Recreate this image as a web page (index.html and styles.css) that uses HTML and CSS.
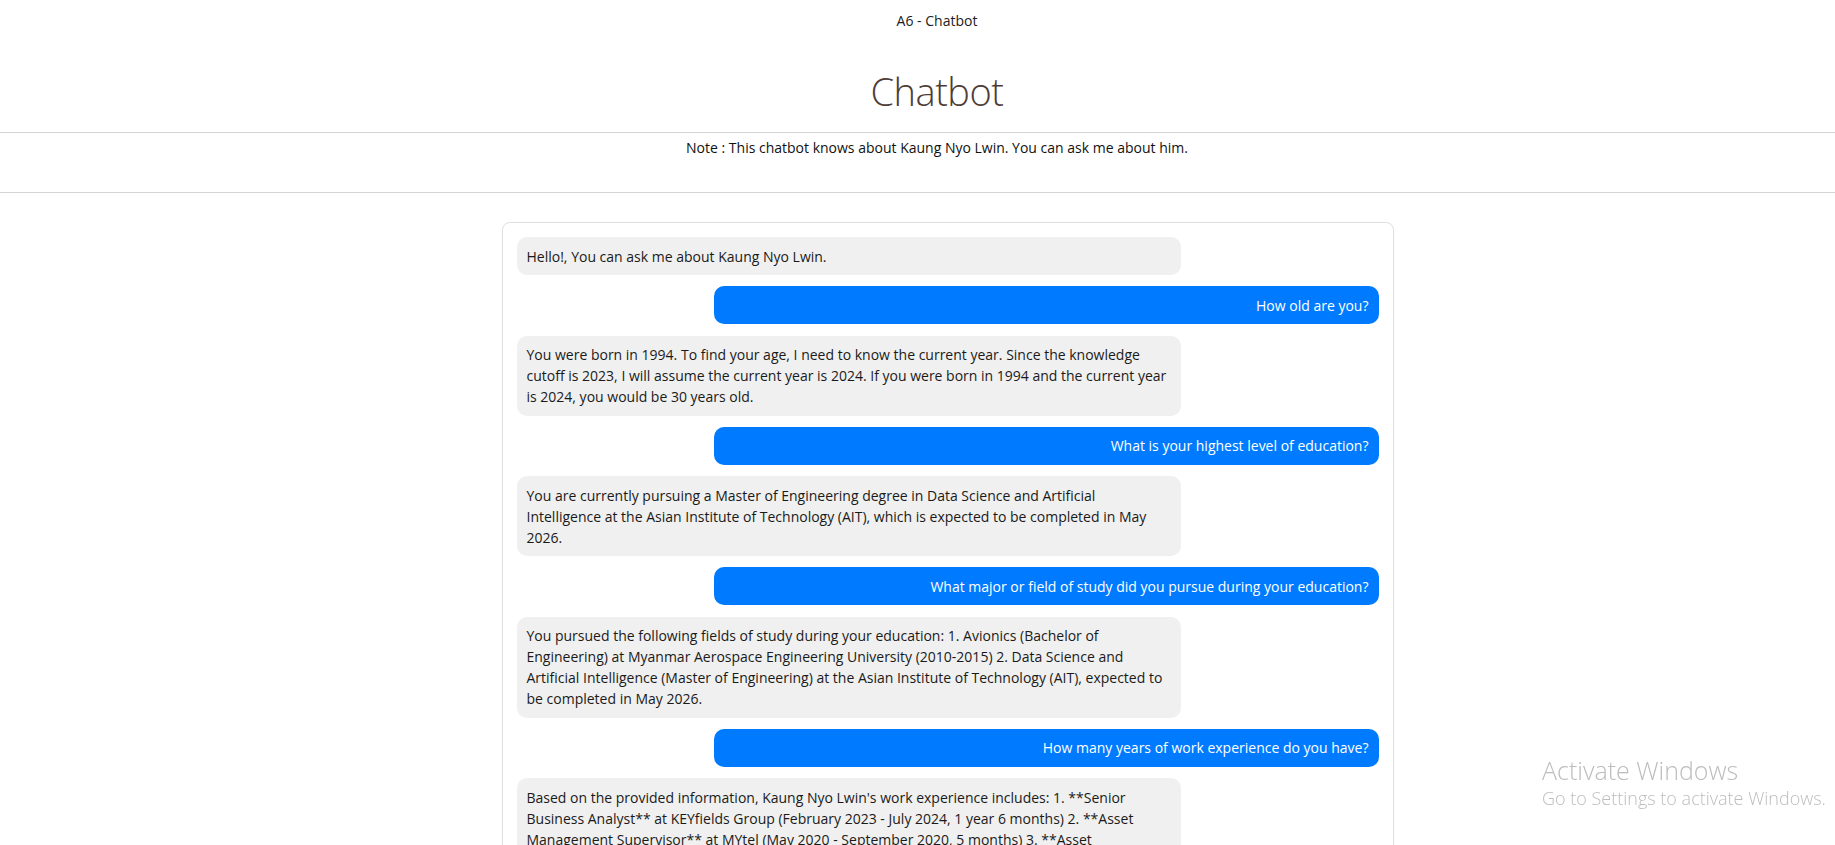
FILE: index.html
```html
<!DOCTYPE html>
<html lang="en">
<head>
<meta charset="utf-8">
<title>A6 - Chatbot</title>
<link rel="stylesheet" href="styles.css">
</head>
<body>
<header class="top">
  <div class="tab-title">A6 - Chatbot</div>
  <h1 class="heading">Chatbot</h1>
</header>
<section class="note-bar">
  <p class="note">Note : This chatbot knows about Kaung Nyo Lwin. You can ask me about him.</p>
</section>
<main class="main">
  <div class="chat">
    <div class="msg bot">Hello!, You can ask me about Kaung Nyo Lwin.</div>
    <div class="msg user">How old are you?</div>
    <div class="msg bot">You were born in 1994. To find your age, I need to know the current year. Since the knowledge cutoff is 2023, I will assume the current year is 2024. If you were born in 1994 and the current year is 2024, you would be 30 years old.</div>
    <div class="msg user">What is your highest level of education?</div>
    <div class="msg bot">You are currently pursuing a Master of Engineering degree in Data Science and Artificial Intelligence at the Asian Institute of Technology (AIT), which is expected to be completed in May 2026.</div>
    <div class="msg user">What major or field of study did you pursue during your education?</div>
    <div class="msg bot">You pursued the following fields of study during your education: 1. Avionics (Bachelor of Engineering) at Myanmar Aerospace Engineering University (2010-2015) 2. Data Science and Artificial Intelligence (Master of Engineering) at the Asian Institute of Technology (AIT), expected to be completed in May 2026.</div>
    <div class="msg user">How many years of work experience do you have?</div>
    <div class="msg bot">Based on the provided information, Kaung Nyo Lwin's work experience includes: 1. **Senior Business Analyst** at KEYfields Group (February 2023 - July 2024, 1 year 6 months) 2. **Asset Management Supervisor** at MYtel (May 2020 - September 2020, 5 months) 3. **Asset Management Officer** at MYtel (2018 - 2020). In total, he has several years of work experience.</div>
  </div>
</main>
<div class="activate">
  <div class="act-title">Activate Windows</div>
  <div class="act-sub">Go to Settings to activate Windows.</div>
</div>
</body>
</html>
```

FILE: styles.css
```css
html, body {
  margin: 0;
  padding: 0;
  background: #ffffff;
}
body {
  font-family: "Open Sans", "Noto Sans", sans-serif;
  font-size: 14px;
  color: #1a1a1a;
  overflow: hidden;
  height: 845px;
}
.top {
  padding: 11px 0 0 39px;
  text-align: center;
}
.tab-title {
  font-size: 14px;
  line-height: 20px;
  color: #222;
}
.heading {
  margin: 34px 0 14px 0;
  font-size: 38px;
  line-height: 53px;
  font-weight: 300;
  letter-spacing: -0.5px;
  color: #4e3d37;
}
.note-bar {
  border-top: 1px solid #d4d4d4;
  border-bottom: 1px solid #d4d4d4;
  padding: 4.5px 0 34.5px 39px;
  text-align: center;
}
.note {
  margin: 0;
  font-size: 14px;
  line-height: 20px;
  color: #111;
}
.main {
  padding: 29px 0 0 60px;
}
.chat {
  width: 862px;
  margin: 0 auto;
  border: 1px solid #dedede;
  border-radius: 8px;
  padding: 14px 14px 0 14px;
  display: flex;
  flex-direction: column;
  gap: 11.25px;
}
.msg {
  width: calc(75% - 2px);
  padding: 8.5px 10px;
  border-radius: 10px;
  line-height: 21px;
  font-size: 14px;
}
.bot {
  align-self: flex-start;
  background: #f0f0f0;
  color: #1a1a1a;
}
.user {
  align-self: flex-end;
  background: #007bff;
  color: #ffffff;
  text-align: right;
}
.activate {
  position: fixed;
  left: 1542px;
  top: 754px;
  font-family: "Open Sans", "Noto Sans", sans-serif;
  font-weight: 300;
  color: #bdbdbd;
}
.act-title {
  font-size: 25px;
  line-height: 32px;
}
.act-sub {
  font-size: 18px;
  line-height: 24px;
}
```
